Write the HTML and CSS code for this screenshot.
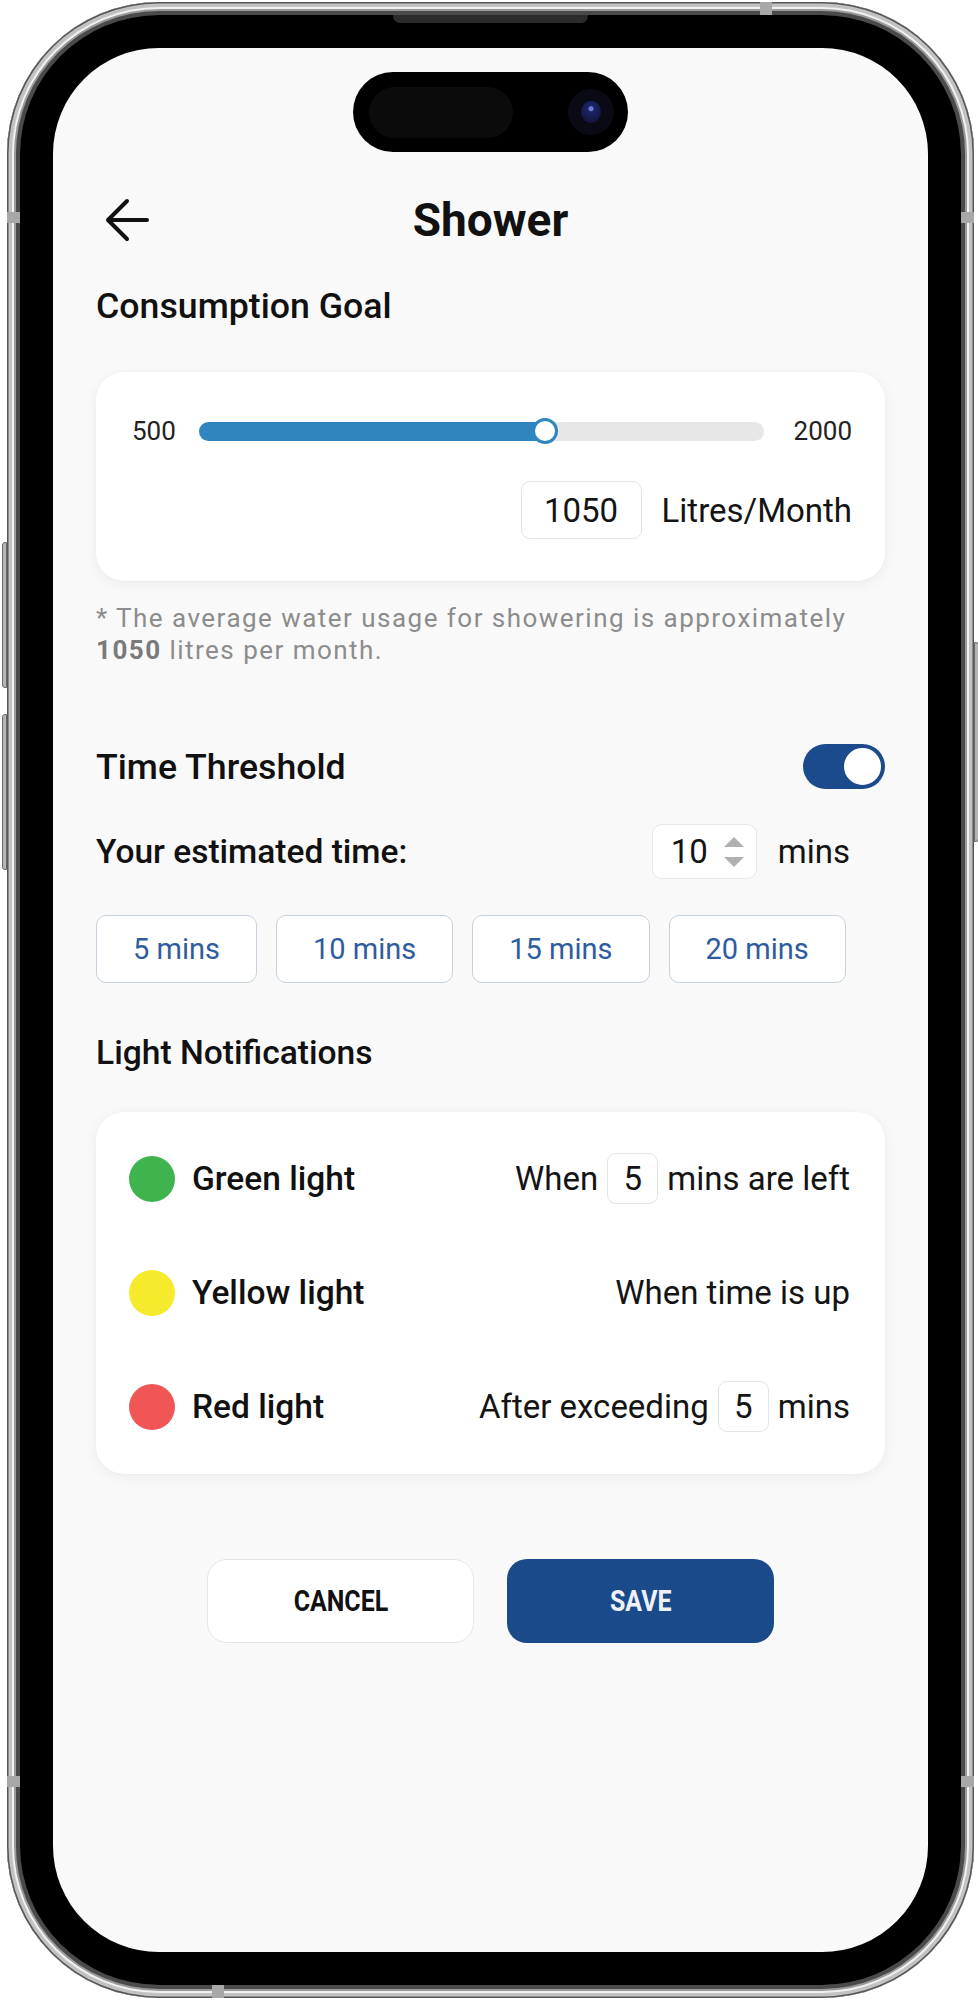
FILE: index.html
```html
<!DOCTYPE html>
<html lang="en">
<head>
<meta charset="utf-8">
<title>Shower</title>
<link rel="stylesheet" href="styles.css">
</head>
<body>
<div class="page">
  <div class="phone">
    <span class="side-btn vol-up"></span>
    <span class="side-btn vol-down"></span>
    <span class="side-btn power"></span>
    <span class="band band-l1"></span>
    <span class="band band-r1"></span>
    <span class="band band-t"></span>
    <span class="band band-b"></span>
    <span class="band band-l2"></span>
    <span class="band band-r2"></span>
    <span class="speaker"></span>
    <div class="bezel">
      <div class="screen">
        <div class="island">
          <span class="island-pill"></span>
          <span class="cam"><span class="lens"></span></span>
        </div>

        <header class="topbar">
          <button class="back" aria-label="Back">
            <svg width="44" height="44" viewBox="0 0 44 44" fill="none" stroke="#111" stroke-width="4" stroke-linecap="round" stroke-linejoin="round">
              <path d="M42 22H3M22 3L3 22L22 41"/>
            </svg>
          </button>
          <h1 class="title">Shower</h1>
          <span class="topbar-spacer"></span>
        </header>

        <main class="content">
          <h2 class="section-title goal-title">Consumption Goal</h2>

          <section class="card goal-card">
            <div class="slider-row">
              <span class="range-label min">500</span>
              <div class="track">
                <div class="fill" style="width:61.3%"><span class="thumb"></span></div>
              </div>
              <span class="range-label max">2000</span>
            </div>
            <div class="goal-input-row">
              <span class="num-box goal-box">1050</span>
              <span class="unit">Litres/Month</span>
            </div>
          </section>

          <p class="note">* The average water usage for showering is approximately <b>1050</b> litres per month.</p>

          <div class="threshold-row">
            <h2 class="section-title">Time Threshold</h2>
            <span class="toggle"><span class="knob"></span></span>
          </div>

          <div class="estimate-row">
            <span class="estimate-label">Your estimated time:</span>
            <span class="spin-box">
              <span class="spin-value">10</span>
              <svg class="spin-arrows" width="22" height="34" viewBox="0 0 22 34">
                <polygon points="11,2 21,12 1,12" fill="#b0b0b0"/>
                <polygon points="1,22 21,22 11,32" fill="#b0b0b0"/>
              </svg>
            </span>
            <span class="estimate-unit">mins</span>
          </div>

          <div class="chips">
            <button class="chip">5 mins</button>
            <button class="chip">10 mins</button>
            <button class="chip">15 mins</button>
            <button class="chip">20 mins</button>
          </div>

          <h3 class="sub-title">Light Notifications</h3>

          <section class="card lights-card">
            <div class="light-row">
              <span class="dot green"></span>
              <span class="light-name">Green light</span>
              <span class="light-rule">When <span class="num-box small-box">5</span> mins are left</span>
            </div>
            <div class="light-row">
              <span class="dot yellow"></span>
              <span class="light-name">Yellow light</span>
              <span class="light-rule">When time is up</span>
            </div>
            <div class="light-row">
              <span class="dot red"></span>
              <span class="light-name">Red light</span>
              <span class="light-rule">After exceeding <span class="num-box small-box">5</span> mins</span>
            </div>
          </section>

          <div class="actions">
            <button class="action cancel"><span class="action-label">CANCEL</span></button>
            <button class="action save"><span class="action-label">SAVE</span></button>
          </div>
        </main>
      </div>
    </div>
  </div>
</div>
</body>
</html>
```

FILE: styles.css
```css
* {
  box-sizing: border-box;
}

html, body {
  margin: 0;
  padding: 0;
  background: #ffffff;
}

body {
  font-family: Roboto, "Liberation Sans", Arial, sans-serif;
  color: #141414;
}

.page {
  padding: 2px 0 0 7px;
}

/* ---------- phone frame ---------- */
.phone {
  position: relative;
  width: 967px;
  height: 1996px;
  padding: 13px;
  border-radius: 152px;
  background: #6f6f6f;
  box-shadow:
    inset 0 0 0 1.5px #575757,
    inset 0 0 0 5px #c2c2c2,
    inset 0 0 0 7px #f0f0f0,
    inset 0 0 0 9px #9a9a9a,
    inset 0 0 0 13px #4a4a4a;
}

.side-btn {
  position: absolute;
  width: 5px;
  background: #b4b4b4;
  border: 1px solid #6a6a6a;
}

.vol-up {
  left: -5px;
  top: 540px;
  height: 146px;
  border-radius: 3px 0 0 3px;
}

.vol-down {
  left: -5px;
  top: 712px;
  height: 156px;
  border-radius: 3px 0 0 3px;
}

.power {
  right: -5px;
  top: 640px;
  height: 200px;
  border-radius: 0 3px 3px 0;
}

.band {
  position: absolute;
  background: #a8a8a8;
}

.band-l1 { left: 0; top: 210px; width: 13px; height: 11px; }
.band-r1 { right: 0; top: 210px; width: 13px; height: 11px; }
.band-l2 { left: 0; top: 1774px; width: 13px; height: 11px; }
.band-r2 { right: 0; top: 1774px; width: 13px; height: 11px; }
.band-t { left: 753px; top: 0; width: 12px; height: 13px; }
.band-b { left: 205px; bottom: 0; width: 12px; height: 13px; }

.speaker {
  position: absolute;
  z-index: 2;
  left: 386px;
  top: 13px;
  width: 195px;
  height: 8px;
  background: #2c2c2c;
  border-radius: 0 0 7px 7px;
}

.bezel {
  width: 100%;
  height: 100%;
  padding: 33px;
  border-radius: 139px;
  background: #000;
}

.screen {
  position: relative;
  width: 875px;
  height: 1904px;
  border-radius: 106px;
  background: #f9f9f9;
  padding-top: 140px;
  overflow: hidden;
}

/* ---------- dynamic island ---------- */
.island {
  position: absolute;
  top: 24px;
  left: 300px;
  width: 275px;
  height: 80px;
  border-radius: 40px;
  background: #000;
  display: flex;
  align-items: center;
  padding-left: 16px;
}

.island-pill {
  width: 144px;
  height: 51px;
  border-radius: 26px;
  background: #0b0b0b;
}

.cam {
  margin-left: auto;
  margin-right: 14px;
  width: 46px;
  height: 46px;
  border-radius: 50%;
  background: #0a0a14;
  display: flex;
  align-items: center;
  justify-content: center;
}

.lens {
  width: 20px;
  height: 22px;
  border-radius: 50%;
  background: radial-gradient(circle at 50% 35%, #6a7cd8 0 2px, #1d2466 3px, #121640 70%);
}

/* ---------- top bar ---------- */
.topbar {
  display: grid;
  grid-template-columns: 1fr auto 1fr;
  align-items: center;
  height: 64px;
  padding: 0 43px;
}

.back {
  justify-self: start;
  margin-left: 9px;
  width: 44px;
  height: 44px;
  padding: 0;
  border: 0;
  background: none;
  display: flex;
}

.title {
  margin: 0;
  font-size: 46px;
  line-height: 64px;
  font-weight: 700;
  color: #111;
}

/* ---------- content ---------- */
.content {
  padding: 0 43px;
}

.section-title {
  margin: 0;
  font-size: 35.7px;
  line-height: 42px;
  font-weight: 500;
  color: #111;
}

.goal-title {
  margin-top: 33px;
}

.card {
  background: #ffffff;
  border-radius: 28px;
  box-shadow: 0 3px 14px rgba(0, 0, 0, 0.06), 0 0 2px rgba(0, 0, 0, 0.03);
}

.goal-card {
  margin-top: 45px;
  height: 209px;
  padding: 46px 33px 0 36px;
}

.slider-row {
  display: flex;
  align-items: center;
  height: 26px;
}

.range-label {
  font-size: 26px;
  color: #222;
  line-height: 26px;
}

.range-label.min {
  margin-right: 23px;
}

.range-label.max {
  margin-left: 30px;
}

.track {
  flex: 1;
  height: 19px;
  border-radius: 10px;
  background: #e7e7e7;
  display: flex;
  align-items: center;
}

.fill {
  height: 19px;
  border-radius: 10px 0 0 10px;
  background: #2f86bf;
  display: flex;
  align-items: center;
  justify-content: flex-end;
}

.thumb {
  flex-shrink: 0;
  width: 26px;
  height: 26px;
  margin-right: -13px;
  border-radius: 50%;
  background: #fff;
  border: 3px solid #2f86bf;
}

.goal-input-row {
  margin-top: 37px;
  display: flex;
  justify-content: flex-end;
  align-items: center;
  gap: 20px;
}

.num-box {
  display: inline-flex;
  align-items: center;
  justify-content: center;
  background: #fff;
  border: 1.5px solid #e4e4e4;
  border-radius: 9px;
  color: #141414;
}

.goal-box {
  width: 121px;
  height: 58px;
  font-size: 33px;
}

.unit {
  font-size: 33px;
  color: #141414;
}

.note {
  margin: 21px 0 0;
  font-size: 26px;
  line-height: 32px;
  letter-spacing: 1.47px;
  color: #8c8c8c;
}

.note b {
  color: #7a7a7a;
  font-weight: 700;
}

.threshold-row {
  margin-top: 78px;
  height: 45px;
  display: flex;
  align-items: center;
  justify-content: space-between;
}

.toggle {
  width: 82px;
  height: 45px;
  border-radius: 23px;
  background: #1b4b8c;
  display: flex;
  align-items: center;
  justify-content: flex-end;
  padding-right: 2px;
}

.knob {
  width: 41px;
  height: 41px;
  border-radius: 50%;
  background: #fff;
  border: 2px solid #1b4b8c;
}

.estimate-row {
  margin-top: 35px;
  height: 55px;
  display: flex;
  align-items: center;
  padding-right: 35px;
}

.estimate-label {
  flex: 1;
  font-size: 33.5px;
  font-weight: 500;
  color: #111;
}

.spin-box {
  width: 105px;
  height: 55px;
  display: flex;
  align-items: center;
  padding: 0 11px 0 18px;
  background: #fff;
  border: 1.5px solid #e8e8e8;
  border-radius: 10px;
}

.spin-value {
  font-size: 33px;
  flex: 1;
}

.estimate-unit {
  margin-left: 21px;
  font-size: 33px;
}

.chips {
  margin-top: 36px;
  display: flex;
  gap: 19px;
}

.chip {
  height: 68px;
  padding: 0 36px;
  border: 1.5px solid #c7d2de;
  border-radius: 10px;
  background: #fff;
  font-family: inherit;
  font-size: 29px;
  color: #2f5c9e;
}

.sub-title {
  margin: 50px 0 0;
  font-size: 33.6px;
  line-height: 40px;
  font-weight: 500;
  color: #111;
}

.lights-card {
  margin-top: 39px;
  height: 362px;
  padding: 41px 35px 0 33px;
  display: flex;
  flex-direction: column;
  gap: 63px;
}

.light-row {
  height: 51px;
  display: flex;
  align-items: center;
}

.dot {
  width: 46px;
  height: 46px;
  border-radius: 50%;
  margin-right: 17px;
}

.dot.green { background: #3fb44e; }
.dot.yellow { background: #f5ea2c; }
.dot.red { background: #f15656; }

.light-name {
  flex: 1;
  font-size: 33.5px;
  font-weight: 500;
  color: #111;
}

.light-rule {
  display: flex;
  align-items: center;
  font-size: 33px;
  color: #141414;
}

.small-box {
  width: 51px;
  height: 51px;
  margin: 0 9px;
  font-size: 33px;
}

.actions {
  margin-top: 85px;
  display: flex;
  justify-content: center;
  gap: 33px;
}

.action {
  width: 267px;
  height: 84px;
  border-radius: 20px;
  font-family: inherit;
  font-size: 29px;
  font-weight: 700;
}

.action-label {
  display: inline-block;
  transform: scaleX(0.86);
}

.cancel {
  background: #fff;
  border: 1.5px solid #e6e6e6;
  color: #111;
}

.save {
  background: #1a4a8a;
  border: 0;
  color: #eef2f8;
}
```
